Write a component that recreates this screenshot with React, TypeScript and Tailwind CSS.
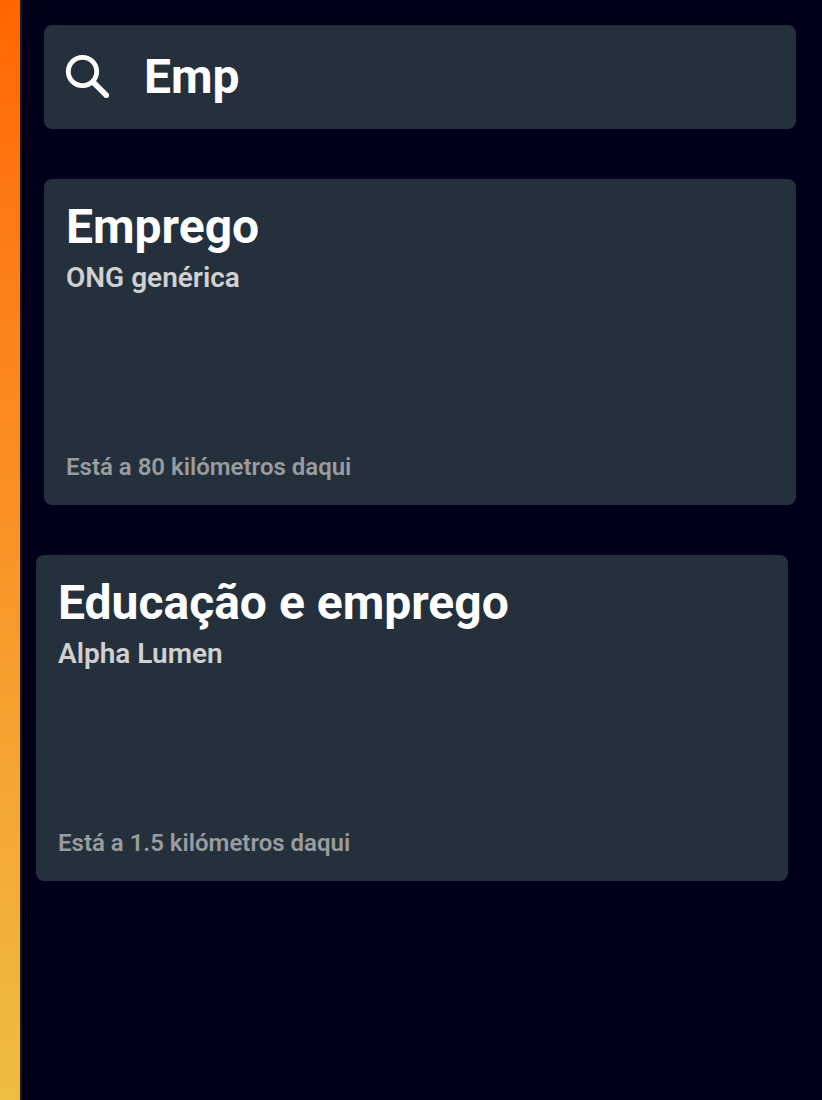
import React from "react";

type Ong = { title: string; org: string; distance: string; align: string };

const results: Ong[] = [
  { title: "Emprego", org: "ONG genérica", distance: "Está a 80 kilómetros daqui", align: "ml-[22px] mr-[26px]" },
  { title: "Educação e emprego", org: "Alpha Lumen", distance: "Está a 1.5 kilómetros daqui", align: "ml-[14px] mr-[34px]" },
];

function ResultCard({ title, org, distance, align }: Ong) {
  return (
    <article className={`flex min-h-[326px] flex-col rounded-lg bg-[#25303d] px-[22px] pt-5 pb-5 ${align}`}>
      <h2 className="text-[48px] leading-[56px] font-bold text-white">{title}</h2>
      <p className="mt-[5px] text-[28px] leading-9 font-semibold text-[#d0d0d0]">{org}</p>
      <p className="mt-auto text-[24px] leading-9 font-semibold text-[#989c9f]">{distance}</p>
    </article>
  );
}

export default function App() {
  return (
    <div className="flex min-h-screen bg-[#00001a] font-['Roboto',sans-serif]">
      <div className="w-[22px] shrink-0 border-r-2 border-[#1c1a22] bg-linear-to-b from-[#ff6600] to-[#eebd40]" />
      <main className="flex min-w-0 flex-1 flex-col gap-[50px] pt-[25px] pb-8">
        <label className="mr-[26px] ml-[22px] flex h-[104px] items-center rounded-lg bg-[#25303d] px-5">
          <svg viewBox="0 0 48 48" className="size-12 shrink-0" fill="none" stroke="white" strokeWidth="4.8" aria-hidden="true">
            <circle cx="18.5" cy="18.5" r="14.2" />
            <path d="M29 29 42.8 42.8" strokeWidth="5.6" />
            <path d="M42.5 42.5h.01" strokeWidth="5" strokeLinecap="round" />
          </svg>
          <input
            type="text"
            aria-label="Pesquisar"
            defaultValue="Emp"
            className="ml-8 h-16 min-w-0 flex-1 bg-transparent text-[48px] font-bold text-white outline-none"
          />
        </label>
        {results.map((r) => (
          <ResultCard key={r.title} {...r} />
        ))}
      </main>
    </div>
  );
}
